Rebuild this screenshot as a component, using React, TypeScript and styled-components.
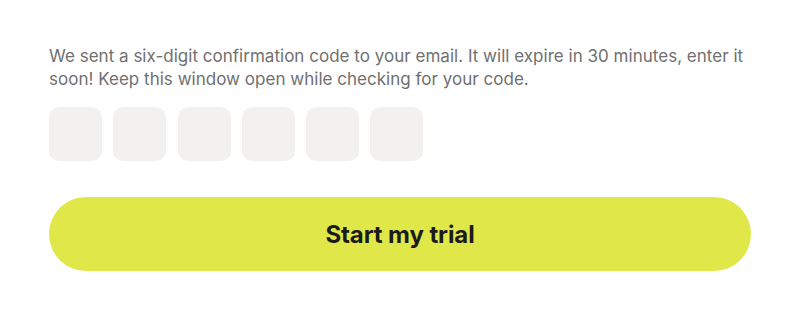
import React from 'react';
import styled, { createGlobalStyle } from 'styled-components';

const GlobalStyle = createGlobalStyle`
  html, body {
    margin: 0;
    padding: 0;
    background: #ffffff;
    font-family: Inter, "Noto Sans", sans-serif;
  }
`;

const Page = styled.div`
  padding: 45px 49px 0 49px;
  display: flex;
  flex-direction: column;
`;

const Message = styled.p`
  margin: 0;
  font-size: 17px;
  line-height: 23px;
  color: #707070;
  letter-spacing: 0.02px;
`;

const CodeRow = styled.div`
  display: flex;
  gap: 11.3px;
  margin-top: 16px;
`;

const CodeBox = styled.input`
  width: 53px;
  height: 54px;
  box-sizing: border-box;
  border: none;
  border-radius: 10px;
  background: #f2f1ef;
  outline: none;
  text-align: center;
  font-size: 22px;
  font-family: inherit;
`;

const StartButton = styled.button`
  margin-top: 36px;
  height: 74px;
  width: 100%;
  border: none;
  border-radius: 37px;
  background: #dfe848;
  color: #1b1b1b;
  font-family: Inter, "Noto Sans", sans-serif;
  font-size: 24px;
  font-weight: 700;
  letter-spacing: -0.1px;
  cursor: pointer;
`;

export default function App() {
  return (
    <>
      <GlobalStyle />
      <Page>
        <Message>
          We sent a six-digit confirmation code to your email. It will expire in 30 minutes, enter it
          soon! Keep this window open while checking for your code.
        </Message>
        <CodeRow>
          {[0, 1, 2, 3, 4, 5].map((i) => (
            <CodeBox key={i} maxLength={1} aria-label={`Digit ${i + 1}`} />
          ))}
        </CodeRow>
        <StartButton>Start my trial</StartButton>
      </Page>
    </>
  );
}
